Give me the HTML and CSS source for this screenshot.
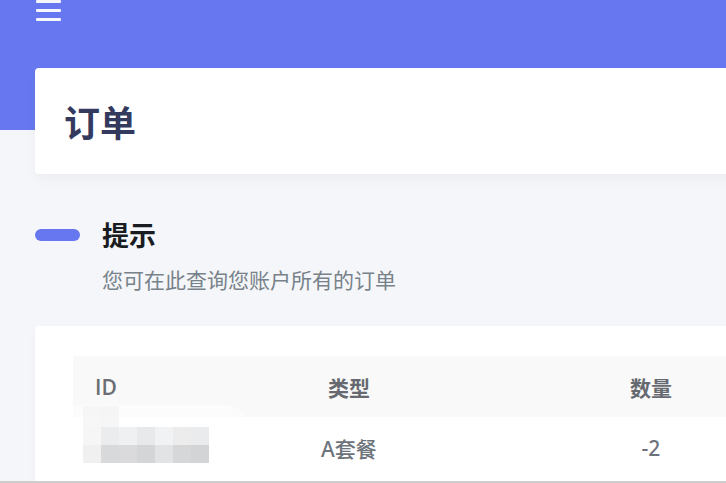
FILE: index.html
```html
<!DOCTYPE html>
<html lang="zh-CN">
<head>
<meta charset="utf-8">
<title>订单</title>
<link rel="stylesheet" href="styles.css">
</head>
<body>
<div class="page">
  <nav class="navbar">
    <div class="menu-icon"><span></span><span></span><span></span></div>
  </nav>
  <main class="main">
    <div class="section-header">
      <h1>订单</h1>
    </div>
    <div class="section-body">
      <h2 class="section-title">提示</h2>
      <p class="section-lead">您可在此查询您账户所有的订单</p>
      <div class="card">
        <table class="table">
          <colgroup>
            <col class="col-id"><col class="col-md"><col class="col-md"><col class="col-md">
          </colgroup>
          <thead>
            <tr><th class="t-left th-latin">ID</th><th>类型</th><th>数量</th><th></th></tr>
          </thead>
          <tbody>
            <tr>
              <td class="t-left id-cell">
                <div class="mosaic">
                  <div class="blob"></div>
                  <div class="grid">
                    <i class="m0a"></i><i class="m0b"></i><i class="m0n"></i><i class="m0n"></i><i class="m0n"></i><i class="m0n"></i><i class="m0n"></i>
                    <i class="m1a"></i><i class="m1b"></i><i class="m1c"></i><i class="m1d"></i><i class="m1e"></i><i class="m1f"></i><i class="m1g"></i>
                    <i class="m2a"></i><i class="m2b"></i><i class="m2c"></i><i class="m2d"></i><i class="m2e"></i><i class="m2f"></i><i class="m2g"></i>
                  </div>
                </div>
              </td>
              <td>A套餐</td><td>-2</td><td></td>
            </tr>
          </tbody>
        </table>
      </div>
    </div>
  </main>
</div>
<div class="hscroll"></div>
</body>
</html>
```
FILE: styles.css
```css
* { box-sizing: border-box; }
html, body { margin: 0; padding: 0; }
body {
  width: 726px;
  height: 483px;
  overflow: hidden;
  font-family: "Noto Sans", "Noto Sans CJK SC", sans-serif;
  background: linear-gradient(to bottom, #6777ef 0, #6777ef 130px, #f4f6f9 130px, #f4f6f9 100%);
}
.page { width: 726px; }
.navbar { height: 68px; padding-left: 36px; }
.menu-icon { display: flex; flex-direction: column; gap: 6px; width: 25px; }
.menu-icon span { display: block; height: 3px; border-radius: 1px; background: rgba(255,255,255,0.94); }

.main { padding-left: 35px; }
.section-header {
  height: 106px;
  margin-right: -40px;
  background: #fff;
  border-radius: 4px;
  box-shadow: 0 6px 12px rgba(0,0,0,0.035);
  display: flex;
  align-items: center;
  padding-left: 29px;
}
.section-header h1 {
  margin: 0;
  font-family: "Noto Sans CJK SC", sans-serif;
  font-size: 36px;
  font-weight: 700;
  line-height: 44px;
  color: #34395e;
}
.section-title {
  margin: 43px 0 0;
  display: flex;
  align-items: center;
  gap: 22px;
  font-family: "Noto Sans CJK SC", sans-serif;
  font-size: 27px;
  font-weight: 700;
  line-height: 36px;
  color: #191d21;
}
.section-title::before {
  content: "";
  display: block;
  width: 45px;
  height: 12px;
  border-radius: 6px;
  background: #6777ef;
}
.section-lead {
  margin: 11px 0 0 67px;
  font-family: "Noto Sans CJK SC", sans-serif;
  font-size: 21px;
  line-height: 30px;
  color: #78828a;
}
.card {
  margin: 32px -40px 0 0;
  background: #fff;
  border-radius: 4px;
  box-shadow: 0 4px 8px rgba(0,0,0,0.03);
  padding: 30px 0 40px 38px;
}
.table {
  border-collapse: collapse;
  table-layout: fixed;
  width: 1031px;
  font-size: 21px;
}
.col-id { width: 125px; }
.col-md { width: 302px; }
.table th, .table td {
  height: 61px;
  padding: 0;
  text-align: center;
  vertical-align: middle;
  font-family: "Noto Sans", "Noto Sans CJK SC", sans-serif;
}
.table th {
  background: #f9f9f9;
  color: #666a70;
  font-weight: 700;
}
.table th.th-latin {
  font-family: "Open Sans", sans-serif;
  font-weight: 600;
  color: #6a6e74;
}
.table td { color: #6c737b; font-weight: 500; }
.table .t-left { text-align: left; padding-left: 22px; }
.id-cell { position: relative; }
.mosaic { position: absolute; left: -8px; top: -12px; width: 190px; height: 58px; }
.blob {
  position: absolute; left: 0; top: 0; width: 182px; height: 22px;
  background: rgba(255,255,255,0.55);
  border-radius: 0 40px 0 0;
}
.grid {
  position: absolute; left: 18px; top: 1px;
  display: grid;
  grid-template-columns: repeat(7, 18px);
  grid-template-rows: 21px 18px 18px;
}
.grid i { display: block; }
.m0a { background: rgba(240,240,240,0.5); }
.m0b { background: rgba(238,238,240,0.5); }
.m0n { background: transparent; }
.m1a { background: #f6f6f6; }
.m1b { background: #ebecee; }
.m1c { background: #eff0f2; }
.m1d { background: #e8e9eb; }
.m1e { background: #f1f2f4; }
.m1f { background: #ececec; }
.m1g { background: #eaebed; }
.m2a { background: #f0f0f0; }
.m2b { background: #d8d9db; }
.m2c { background: #dadadc; }
.m2d { background: #d4d5d7; }
.m2e { background: #e1e3e4; }
.m2f { background: #d5d7d9; }
.m2g { background: #d2d4d6; }
.hscroll {
  position: fixed; left: 0; right: 0; bottom: 0; height: 2px;
  background: #cdcdcd;
}
```
